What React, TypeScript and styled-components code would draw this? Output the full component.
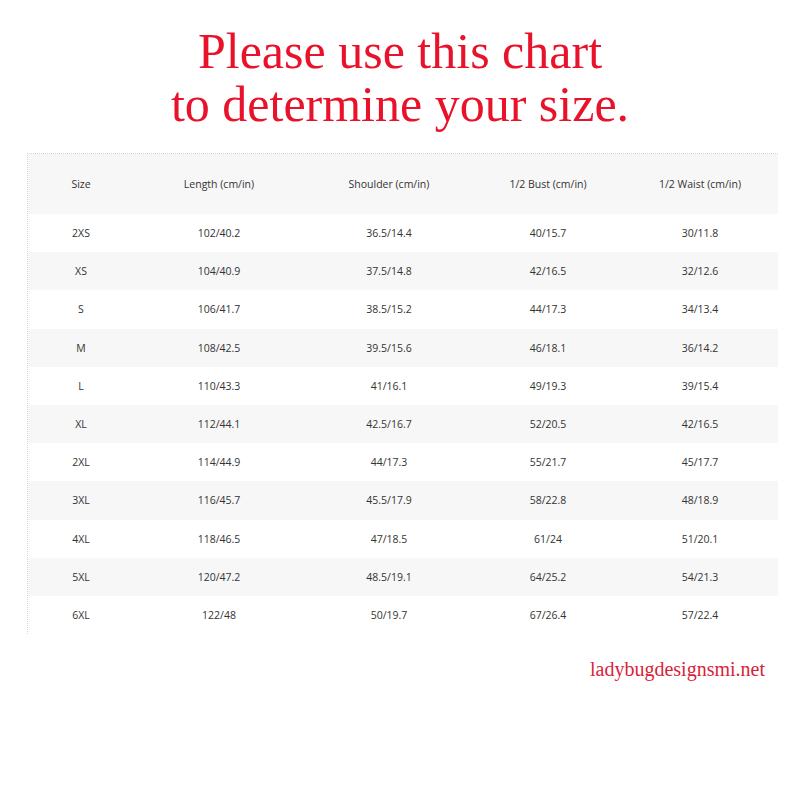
import React from 'react';
import styled, { createGlobalStyle } from 'styled-components';

const GlobalStyle = createGlobalStyle`
    body {
        margin: 0;
        background: #ffffff;
    }
`;

const Page = styled.div`
    width: 800px;
    height: 800px;
    display: flex;
    flex-direction: column;
    background: #ffffff;
    padding-top: 25px;
    box-sizing: border-box;
`;

const Title = styled.h1`
    margin: 0;
    font-family: "Liberation Serif", "DejaVu Serif", serif;
    font-weight: 400;
    font-size: 50px;
    line-height: 53px;
    color: #e8122b;
    text-align: center;
`;

const Table = styled.div`
    margin: 22px 0 0 27px;
    width: 750px;
    border-top: 1px dotted #d6d6d6;
    border-left: 1px dotted #d6d6d6;
    font-family: "Open Sans", "Noto Sans", sans-serif;
    font-size: 10.5px;
    color: #333333;
`;

const Row = styled.div<{ $head?: boolean; $shade?: boolean }>`
    display: grid;
    grid-template-columns: 106px 170px 170px 148px 156px;
    align-items: center;
    height: ${p => (p.$head ? '60px' : '38.2px')};
    background: ${p => (p.$shade ? '#f7f7f7' : '#ffffff')};
`;

const Cell = styled.div`
    text-align: center;
`;

const Footer = styled.div`
    margin-top: 23px;
    padding-right: 35px;
    text-align: right;
    font-family: "Liberation Serif", "DejaVu Serif", serif;
    font-size: 20px;
    line-height: 24px;
    color: #d81f3a;
`;

const headers = ['Size', 'Length (cm/in)', 'Shoulder (cm/in)', '1/2 Bust (cm/in)', '1/2 Waist (cm/in)'];

const rows = [
    ['2XS', '102/40.2', '36.5/14.4', '40/15.7', '30/11.8'],
    ['XS', '104/40.9', '37.5/14.8', '42/16.5', '32/12.6'],
    ['S', '106/41.7', '38.5/15.2', '44/17.3', '34/13.4'],
    ['M', '108/42.5', '39.5/15.6', '46/18.1', '36/14.2'],
    ['L', '110/43.3', '41/16.1', '49/19.3', '39/15.4'],
    ['XL', '112/44.1', '42.5/16.7', '52/20.5', '42/16.5'],
    ['2XL', '114/44.9', '44/17.3', '55/21.7', '45/17.7'],
    ['3XL', '116/45.7', '45.5/17.9', '58/22.8', '48/18.9'],
    ['4XL', '118/46.5', '47/18.5', '61/24', '51/20.1'],
    ['5XL', '120/47.2', '48.5/19.1', '64/25.2', '54/21.3'],
    ['6XL', '122/48', '50/19.7', '67/26.4', '57/22.4'],
];

export default function App() {
    return (
        <>
            <GlobalStyle />
            <Page>
                <Title>
                    Please use this chart
                    <br />
                    to determine your size.
                </Title>
                <Table>
                    <Row $head $shade>
                        {headers.map(h => (
                            <Cell key={h}>{h}</Cell>
                        ))}
                    </Row>
                    {rows.map((r, i) => (
                        <Row key={r[0]} $shade={i % 2 === 1}>
                            {r.map((v, j) => (
                                <Cell key={j}>{v}</Cell>
                            ))}
                        </Row>
                    ))}
                </Table>
                <Footer>ladybugdesignsmi.net</Footer>
            </Page>
        </>
    );
}
